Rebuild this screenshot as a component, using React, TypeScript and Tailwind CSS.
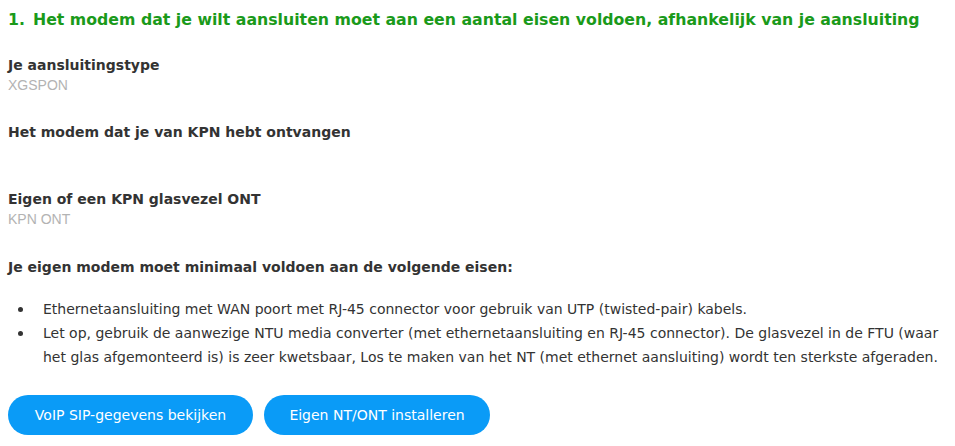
const eisen = [
    "Ethernetaansluiting met WAN poort met RJ-45 connector voor gebruik van UTP (twisted-pair) kabels.",
    "Let op, gebruik de aanwezige NTU media converter (met ethernetaansluiting en RJ-45 connector). De glasvezel in de FTU (waar het glas afgemonteerd is) is zeer kwetsbaar, Los te maken van het NT (met ethernet aansluiting) wordt ten sterkste afgeraden.",
];

export default function App() {
    return (
        <div className="bg-white px-2 pt-2 text-[#333] font-['DejaVu_Sans',sans-serif]">
            <h2 className="flex gap-[8px] text-[15.75px] font-bold leading-[24px] text-[#1a9a1a]">
                <span>1.</span>
                <span>Het modem dat je wilt aansluiten moet aan een aantal eisen voldoen, afhankelijk van je aansluiting</span>
            </h2>

            <div className="mt-[23px]">
                <div className="text-[14px] font-bold leading-[20px]">Je aansluitingstype</div>
                <div className="text-[14px] leading-[20px] text-[#b3b3b3] font-['Liberation_Sans',sans-serif]">XGSPON</div>
            </div>

            <div className="mt-[27px]">
                <div className="text-[14px] font-bold leading-[20px]">Het modem dat je van KPN hebt ontvangen</div>
                <div className="h-[20px]"></div>
            </div>

            <div className="mt-[27px]">
                <div className="text-[14px] font-bold leading-[20px]">Eigen of een KPN glasvezel ONT</div>
                <div className="text-[14px] leading-[20px] text-[#b3b3b3] font-['Liberation_Sans',sans-serif]">KPN ONT</div>
            </div>

            <div className="mt-[28px] text-[14px] font-bold leading-[20px]">
                Je eigen modem moet minimaal voldoen aan de volgende eisen:
            </div>

            <ul className="mt-[20px] text-[14px] leading-[24px]">
                {eisen.map((eis) => (
                    <li key={eis} className="flex">
                        <span className="w-[35px] shrink-0 pl-[10px] pt-[10px]">
                            <span className="block h-[5px] w-[5px] rounded-full bg-[#333]"></span>
                        </span>
                        <span>{eis}</span>
                    </li>
                ))}
            </ul>

            <div className="mt-[26px] flex gap-[11px]">
                <button className="h-[40px] w-[245px] rounded-full bg-[#0a9bf7] text-[14px] text-white">
                    VoIP SIP-gegevens bekijken
                </button>
                <button className="h-[40px] w-[226px] rounded-full bg-[#0a9bf7] text-[14px] text-white">
                    Eigen NT/ONT installeren
                </button>
            </div>
        </div>
    );
}
